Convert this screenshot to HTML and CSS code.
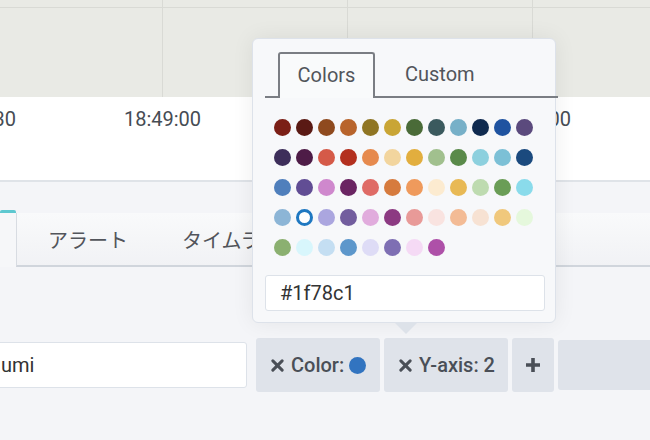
FILE: index.html
```html
<!DOCTYPE html>
<html>
<head>
<meta charset="utf-8">
<link rel="stylesheet" href="styles.css">
</head>
<body>
<div class="page">
  <div class="chart"></div>
  <div class="axis">
    <span class="tick">18:48:30</span>
    <span class="tick">18:49:00</span>
    <span class="tick">18:49:30</span>
    <span class="tick">18:50:00</span>
  </div>
  <div class="tabs">
    <div class="tab-active"></div>
    <div class="tab-strip">
      <span class="tab">アラート</span>
      <span class="tab">タイムライン</span>
    </div>
  </div>
  <div class="row">
    <div class="text-input">umi</div>
    <div class="chip chip-color">
      <svg class="x-icon" viewBox="0 0 14 14" width="13" height="13"><path d="M2 2 L12 12 M12 2 L2 12" stroke="#4a4f57" stroke-width="3.2" stroke-linecap="round"/></svg>
      <span>Color:</span>
      <span class="chip-dot"></span>
    </div>
    <div class="chip chip-axis">
      <svg class="x-icon" viewBox="0 0 14 14" width="13" height="13"><path d="M2 2 L12 12 M12 2 L2 12" stroke="#4a4f57" stroke-width="3.2" stroke-linecap="round"/></svg>
      <span>Y-axis: 2</span>
    </div>
    <div class="chip chip-plus">
      <svg viewBox="0 0 16 16" width="16" height="16"><path d="M8 1 V15 M1 8 H15" stroke="#4a4f57" stroke-width="3.6"/></svg>
    </div>
    <div class="chip chip-wide"></div>
  </div>

  <div class="popover">
    <div class="pop-tabs">
      <span class="pop-tab active">Colors</span>
      <span class="pop-tab">Custom</span>
    </div>
    <div class="swatches">
      <span class="sw" style="background:#7b1f16"></span>
      <span class="sw" style="background:#5a1a14"></span>
      <span class="sw" style="background:#8f4a1e"></span>
      <span class="sw" style="background:#b8642c"></span>
      <span class="sw" style="background:#8f7523"></span>
      <span class="sw" style="background:#c9a535"></span>
      <span class="sw" style="background:#4a6b38"></span>
      <span class="sw" style="background:#3b5a5e"></span>
      <span class="sw" style="background:#77b0c8"></span>
      <span class="sw" style="background:#0f2a4f"></span>
      <span class="sw" style="background:#1f53a0"></span>
      <span class="sw" style="background:#5b4a7d"></span>

      <span class="sw" style="background:#3d2e5a"></span>
      <span class="sw" style="background:#4e1c47"></span>
      <span class="sw" style="background:#d55a48"></span>
      <span class="sw" style="background:#b3301f"></span>
      <span class="sw" style="background:#e68a4e"></span>
      <span class="sw" style="background:#f2d59e"></span>
      <span class="sw" style="background:#e2ae3e"></span>
      <span class="sw" style="background:#a1c08e"></span>
      <span class="sw" style="background:#5a8a4a"></span>
      <span class="sw" style="background:#8dd0de"></span>
      <span class="sw" style="background:#7cc0d6"></span>
      <span class="sw" style="background:#1b4a7e"></span>

      <span class="sw" style="background:#4f7fbc"></span>
      <span class="sw" style="background:#614d94"></span>
      <span class="sw" style="background:#cf88cd"></span>
      <span class="sw" style="background:#6a2462"></span>
      <span class="sw" style="background:#df6b66"></span>
      <span class="sw" style="background:#d67b3e"></span>
      <span class="sw" style="background:#ef9a5c"></span>
      <span class="sw" style="background:#fcebd0"></span>
      <span class="sw" style="background:#e8b955"></span>
      <span class="sw" style="background:#bedbb0"></span>
      <span class="sw" style="background:#6a9d56"></span>
      <span class="sw" style="background:#8adbeb"></span>

      <span class="sw" style="background:#8cb5d6"></span>
      <span class="sw selected"></span>
      <span class="sw" style="background:#aba6df"></span>
      <span class="sw" style="background:#725d9e"></span>
      <span class="sw" style="background:#e1acdd"></span>
      <span class="sw" style="background:#8c3a82"></span>
      <span class="sw" style="background:#e89a98"></span>
      <span class="sw" style="background:#f9e3e0"></span>
      <span class="sw" style="background:#f3bb95"></span>
      <span class="sw" style="background:#f7e2d3"></span>
      <span class="sw" style="background:#f0c87c"></span>
      <span class="sw" style="background:#e5f8dc"></span>

      <span class="sw" style="background:#8bb070"></span>
      <span class="sw" style="background:#d8f6fc"></span>
      <span class="sw" style="background:#c4def2"></span>
      <span class="sw" style="background:#5d97cb"></span>
      <span class="sw" style="background:#dedcf6"></span>
      <span class="sw" style="background:#7e6fb3"></span>
      <span class="sw" style="background:#f5daf5"></span>
      <span class="sw" style="background:#ae50a8"></span>
    </div>
    <div class="hex-input">#1f78c1</div>
  </div>
</div>
</body>
</html>
```

FILE: styles.css
```css
html, body {
  margin: 0;
  padding: 0;
}
body {
  background: #f4f5f8;
  font-family: Roboto, "Noto Sans CJK JP", sans-serif;
  color: #464c54;
  width: 650px;
  height: 440px;
  overflow: hidden;
}
.page {
  position: relative;
  width: 650px;
  height: 440px;
  overflow: hidden;
}
.chart {
  height: 97px;
  background-color: #e9eae5;
  background-image:
    linear-gradient(to bottom, #d9dad5 0, #d9dad5 1px, transparent 1px),
    linear-gradient(to right, #d9dad5 0, #d9dad5 1px, transparent 1px);
  background-size: 100% 100%, 185px 100%;
  background-position: 0 7px, 162px 0;
  background-repeat: no-repeat, repeat-x;
}
.axis {
  height: 83px;
  background: #ffffff;
  border-bottom: 2px solid #dfe3e8;
  display: grid;
  grid-template-columns: repeat(4, 185px);
  margin-left: -115px;
  width: 800px;
}
.tick {
  text-align: center;
  font-size: 20px;
  line-height: 22px;
  margin-top: 11px;
  color: #464c54;
}
.tabs {
  margin-top: 28px;
  height: 57px;
  display: flex;
}
.tab-active {
  width: 16px;
  border-top: 3px solid #5ec8d0;
  border-radius: 2px 2px 0 0;
  background: #f6f7f9;
}
.tab-strip {
  flex: 1;
  margin-top: 3px;
  border-left: 1px solid #d8dce2;
  border-bottom: 2px solid #d0d5dc;
  background: linear-gradient(to bottom, #f9fafb, #f1f2f5);
  display: flex;
  align-items: center;
  padding-left: 4px;
}
.tab {
  font-size: 20px;
  color: #52555b;
  padding: 0 27px;
  white-space: nowrap;
}
.row {
  margin-top: 71px;
  display: flex;
  align-items: center;
  gap: 4px;
}
.row > * {
  flex-shrink: 0;
}
.text-input {
  margin-left: -10px;
  width: 257px;
  height: 46px;
  box-sizing: border-box;
  padding-left: 10px;
  background: #ffffff;
  border: 1px solid #dde2e9;
  border-radius: 3px;
  font-size: 20px;
  line-height: 44px;
  color: #333;
  margin-right: 5px;
}
.chip {
  height: 54px;
  background: #dfe3ea;
  border-radius: 3px;
  display: flex;
  align-items: center;
  gap: 7px;
  padding: 0 0 0 15px;
  box-sizing: border-box;
  font-size: 20px;
  font-weight: 500;
  color: #4a4f57;
}
.chip-color {
  width: 124px;
}
.chip-axis {
  width: 124px;
}
.chip-plus {
  width: 42px;
  justify-content: center;
  padding: 0;
}
.chip-wide {
  width: 120px;
  height: 50px;
}
.chip-dot {
  width: 17px;
  height: 17px;
  border-radius: 50%;
  background: #3274c0;
  margin-left: -2px;
}
.x-icon {
  flex-shrink: 0;
}
.popover {
  position: absolute;
  left: 252px;
  top: 38px;
  width: 304px;
  height: 285px;
  box-sizing: border-box;
  background: #f7f8fa;
  border: 1px solid #dde2ea;
  border-radius: 6px;
  box-shadow: 0 0 22px rgba(0, 0, 0, 0.07);
  padding: 13px 10px 0 12px;
}
.popover::after {
  content: "";
  position: absolute;
  left: 142px;
  bottom: -12px;
  border-left: 11px solid transparent;
  border-right: 11px solid transparent;
  border-top: 11px solid #dde2e9;
}
.pop-tabs {
  display: flex;
  height: 44px;
  border-bottom: 2px solid #7a7d83;
  padding-left: 13px;
  width: 280px;
  box-sizing: content-box;
}
.pop-tab {
  font-size: 20px;
  color: #52555b;
  line-height: 44px;
  white-space: nowrap;
}
.pop-tab.active {
  border: 2px solid #7a7d83;
  border-bottom: none;
  border-radius: 3px 3px 0 0;
  background: #f9fafb;
  margin-bottom: -2px;
  line-height: 42px;
  height: 46px;
  box-sizing: border-box;
  width: 97px;
  text-align: center;
}
.pop-tab:not(.active) {
  padding-left: 30px;
}
.swatches {
  display: grid;
  grid-template-columns: repeat(12, 22px);
  grid-auto-rows: 30px;
  margin-top: 14px;
  margin-left: 6px;
}
.sw {
  width: 17px;
  height: 17px;
  border-radius: 50%;
  justify-self: center;
  align-self: center;
  box-sizing: border-box;
}
.sw.selected {
  background: #ffffff;
  border: 3px solid #1f78c1;
}
.hex-input {
  margin-top: 13px;
  width: 280px;
  height: 36px;
  box-sizing: border-box;
  background: #ffffff;
  border: 1px solid #dde2e9;
  border-radius: 3px;
  font-size: 20px;
  line-height: 34px;
  padding-left: 14px;
  color: #333;
}
```
